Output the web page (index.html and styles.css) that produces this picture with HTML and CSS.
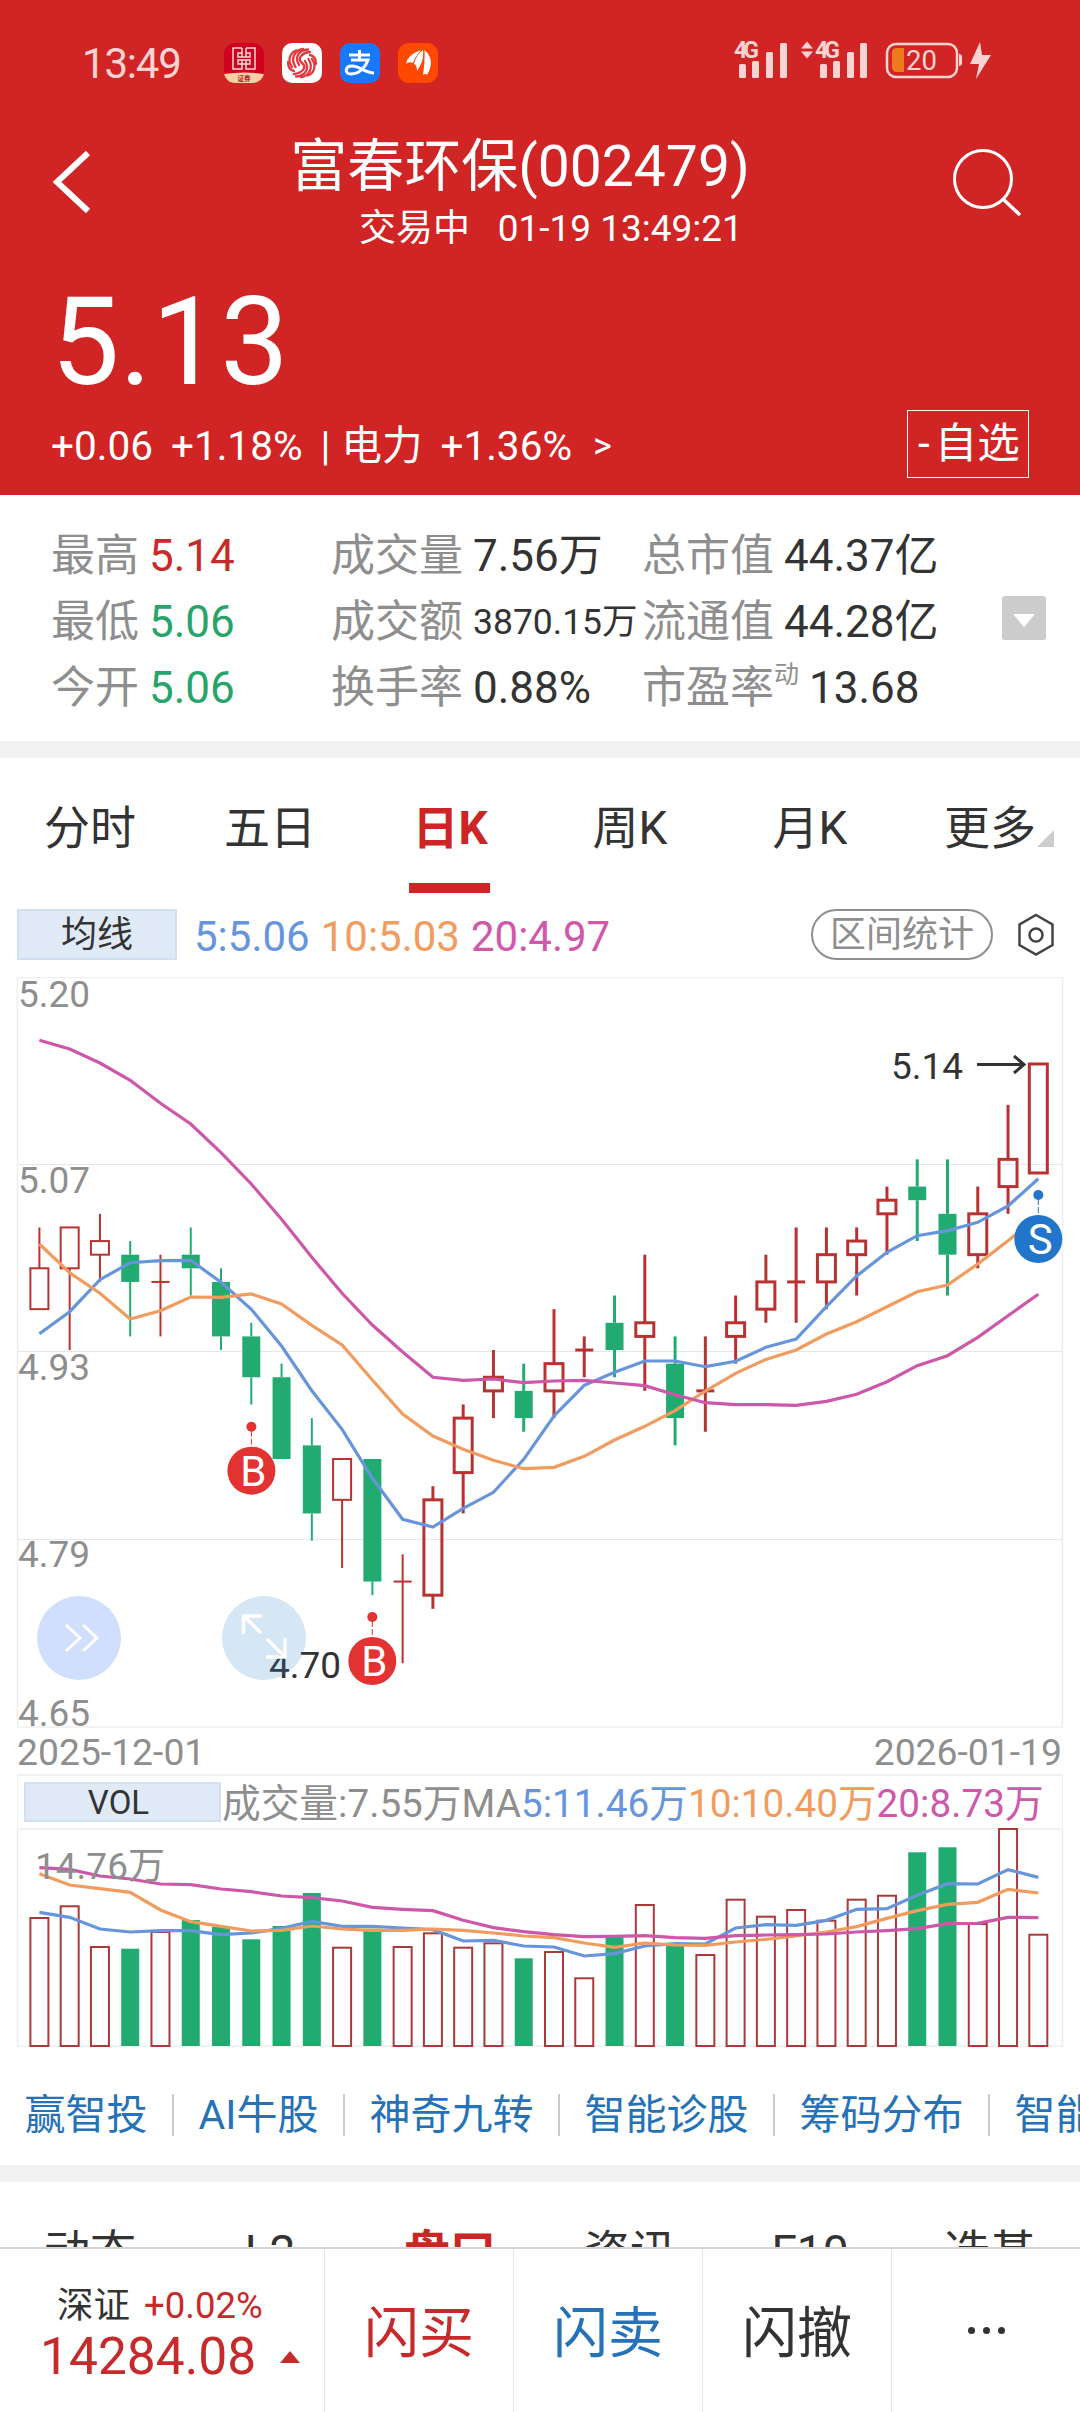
FILE: index.html
```html
<!DOCTYPE html>
<html lang="zh-CN">
<head>
  <meta charset="UTF-8" />
  <meta name="viewport" content="width=device-width, initial-scale=1.0"/>
  <title>富春环保(002479)</title>
  <link rel="stylesheet" href="styles.css">
</head>
<body>
  <header class="header">
    <div class="status-bar">
      <span class="clock">13:49</span>
      <div class="app-icons">
        <svg width="40" height="40" viewBox="0 0 40 40">
          <clipPath id="appClip"><rect width="40" height="40" rx="11"/></clipPath>
          <g clip-path="url(#appClip)">
            <rect width="40" height="40" fill="#d0021f"/>
            <path d="M0 31Q20 28 40 31V40H0Z" fill="#fbd0a4"/>
          </g>
          <path d="M18 5H9V26H18V21H14V17H18M22 5H31V26H22V21H26V17H22M18 5V10H14V14H26V10H22V5M18 10V14M22 10V14M18 17V21H22V17Z" fill="none" stroke="#ffd9d9" stroke-width="1.5"/>
          <text x="20" y="38" text-anchor="middle" font-size="6.5" font-weight="bold" fill="#b3152a">证券</text>
        </svg>
        <svg width="40" height="40" viewBox="0 0 40 40">
          <rect width="40" height="40" rx="10" fill="#fff"/>
          <g fill="none" stroke="#e03a40" stroke-width="2.3" stroke-linecap="round">
            <path d="M20 20C15 16 19 10 28 9"/>
            <path d="M17 22C12 14 17 7 26 6.500"/>
            <path d="M13.500 24C8 15 13 7 21 6"/>
            <path d="M10 24C5 17 8 10 14 7.500"/>
            <path d="M20 20C25 24 21 30 12 31"/>
            <path d="M23 18C28 26 23 33 14 33.500"/>
            <path d="M26.500 16C32 25 27 33 19 34"/>
            <path d="M30 16C35 23 32 30 26 32.500"/>
            <path d="M28 12C33 13 34 17 34 21"/>
            <path d="M12 28C7 27 6 23 6 19"/>
          </g>
        </svg>
        <svg width="40" height="40" viewBox="0 0 40 40">
          <rect width="40" height="40" rx="10" fill="#1878ff"/>
          <path d="M9 12H30M19.500 7V17M11 17H28C26 23 20 31 11 31C4 31 5 23 12 23C20 23 25 30 34 30" fill="none" stroke="#fff" stroke-width="3"/>
        </svg>
        <svg width="40" height="40" viewBox="0 0 40 40">
          <rect width="40" height="40" rx="11" fill="#ff4800"/>
          <path d="M8 21Q9 12 23 7Q17 14 15 20Q11 18 8 21ZM16 21Q18 12 25 7Q26 16 22 23L19 28Q19 22 16 21ZM25 32Q27 18 26.500 7Q38 17 29 32Q27 30 25 32Z" fill="#fff"/>
        </svg>
      </div>
      <svg class="signal" width="280" height="56" viewBox="0 -6 280 56">
        <g fill="#fbd3d3">
          <text x="2" y="17" class="net" textLength="25">4G</text>
          <rect x="7" y="23" width="7" height="14" rx="1.500"/><rect x="20" y="20" width="7" height="17" rx="1.500"/><rect x="34" y="11" width="7" height="26" rx="1.500"/><rect x="48" y="2" width="7" height="35" rx="1.500"/>
          <path d="M69 7.500l6-7 6 7zM69 10.500l6 7 6-7z"/>
          <text x="83" y="17" class="net" textLength="25">4G</text>
          <rect x="88" y="23" width="7" height="14" rx="1.500"/><rect x="101" y="20" width="7" height="17" rx="1.500"/><rect x="115" y="11" width="7" height="26" rx="1.500"/><rect x="128" y="2" width="7" height="35" rx="1.500"/>
          <rect x="155" y="3" width="70" height="33" rx="9" fill="none" stroke="#fbd3d3" stroke-width="2.500"/>
          <path d="M227 13q3 0 3 3v6q0 3-3 3z"/>
          <path d="M172 7h-7q-5 0-5 5v14q0 5 5 5h7z" fill="#ee7b1b"/>
          <text x="174" y="29" font-size="27.500" textLength="31">20</text>
          <path d="M248 1L238 23H247L244 38L259 14H250Z"/>
        </g>
      </svg>
    </div>

    <div class="title-bar">
      <svg class="back" width="50" height="70" viewBox="0 0 50 70"><path d="M40 6L9 35L40 64" fill="none" stroke="#fff" stroke-width="6"/></svg>
      <div class="title">
        <h1>富春环保(002479)</h1>
        <p>交易中&nbsp;&nbsp; 01-19 13:49:21</p>
      </div>
      <svg class="search" width="74" height="74" viewBox="0 0 74 74"><circle cx="33" cy="33" r="28.500" fill="none" stroke="#fff" stroke-width="3"/><path d="M53 53L70 69" stroke="#fff" stroke-width="3.500"/></svg>
    </div>

    <div class="price">5.13</div>
    <div class="change">
      <div class="change-text"><span>+0.06</span><span>+1.18%</span><span class="bar">|</span><span>电力</span><span>+1.36%</span><span class="more">&gt;</span></div>
      <button class="fav">-<span>自选</span></button>
    </div>
  </header>

  <section class="stats">
    <div class="stat"><label>最高</label><b class="up">5.14</b></div>
    <div class="stat"><label>成交量</label><b>7.56万</b></div>
    <div class="stat"><label>总市值</label><b>44.37亿</b></div>
    <div class="stat"><label>最低</label><b class="down">5.06</b></div>
    <div class="stat"><label>成交额</label><b class="small">3870.15万</b></div>
    <div class="stat"><label>流通值</label><b>44.28亿</b></div>
    <div class="stat"><label>今开</label><b class="down">5.06</b></div>
    <div class="stat"><label>换手率</label><b>0.88%</b></div>
    <div class="stat"><label>市盈率<sup>动</sup></label><b>13.68</b></div>
    <button class="expand"></button>
  </section>

  <nav class="tabs">
    <a>分时</a><a>五日</a><a class="active">日K</a><a>周K</a><a>月K</a><a class="has-more">更多</a>
  </nav>

  <div class="ma-row">
    <button class="index-btn">均线</button>
    <span class="c5">5:5.06</span><span class="c10">10:5.03</span><span class="c20">20:4.97</span>
    <button class="range-btn">区间统计</button>
    <svg width="38" height="46" viewBox="0 0 38 46"><path d="M19 3L35.500 12.500V33L19 42.500L2.500 33V12.500Z" fill="none" stroke="#444" stroke-width="2.500"/><circle cx="19" cy="23" r="6.500" fill="none" stroke="#444" stroke-width="2.500"/></svg>
  </div>

  <svg id="kline" width="1080" height="752" viewBox="0 977 1080 752"></svg>
  <div class="dates"><span>2025-12-01</span><span>2026-01-19</span></div>

  <div class="vol-row">
    <button class="index-btn">VOL</button>
    <span>成交量:7.55万MA</span><span class="c5">5:11.46万</span><span class="c10">10:10.40万</span><span class="c20">20:8.73万</span>
  </div>
  <svg id="volume" width="1080" height="220" viewBox="0 1828 1080 220"></svg>

  <div class="links">
    <a>赢智投</a><a>AI牛股</a><a>神奇九转</a><a>智能诊股</a><a>筹码分布</a><a>智能盯盘</a>
  </div>

  <nav class="tabs lower">
    <a>动态</a><a>L2</a><a class="active">盘口</a><a>资讯</a><a>F10</a><a>选基</a>
  </nav>

  <footer class="footer">
    <div class="index">
      <div class="index-name">深证 <span>+0.02%</span></div>
      <div class="index-value">14284.08<i></i></div>
    </div>
    <a class="buy">闪买</a>
    <a class="sell">闪卖</a>
    <a>闪撤</a>
    <a class="dots"><i></i><i></i><i></i></a>
  </footer>

  <script src="chart.js"></script>
</body>
</html>
```
FILE: styles.css
```css
* {
  box-sizing: border-box;
}
body {
  margin: 0;
  width: 1080px;
  height: 2412px;
  overflow: hidden;
  background: #fff;
  color: #333;
  font-family: Roboto, "Noto Sans CJK SC", sans-serif;
}
svg {
  display: block;
  flex-shrink: 0;
}
button {
  font-family: inherit;
  padding: 0;
  color: inherit;
  background: none;
}
.header {
  height: 495px;
  background: #d12525;
  color: #fff;
}

/* status bar */
.status-bar {
  height: 126px;
  display: flex;
  align-items: center;
  padding-left: 82px;
}
.clock {
  width: 142px;
  font-size: 42px;
  letter-spacing: -1.2px;
  color: #fbd3d3;
}
.app-icons {
  display: flex;
  gap: 18px;
}
.signal {
  margin-left: 294px;
}
.net {
  font-size: 23px;
  font-weight: bold;
}

/* title */
.title-bar {
  height: 134px;
  display: flex;
  justify-content: space-between;
  padding: 0 56px 0 48px;
}
.back {
  margin-top: 21px;
}
.search {
  margin-top: 20px;
}
.title {
  text-align: center;
  margin-left: -8px;
}
.title h1 {
  margin: 8px 0 0;
  font-size: 57px;
  line-height: 66px;
  font-weight: normal;
}
.title p {
  margin: 7px 0 0;
  padding-left: 62px;
  font-size: 37px;
  line-height: 44px;
  white-space: nowrap;
}
.price {
  height: 148px;
  padding-left: 51px;
  font-size: 122px;
  line-height: 166px;
}
.change {
  display: flex;
  justify-content: space-between;
  align-items: center;
  padding: 2px 51px 0 51px;
}
.change-text {
  display: flex;
  align-items: center;
  padding-top: 3px;
  font-size: 40.500px;
  line-height: 50px;
}
.change-text span {
  margin-right: 18px;
}
.change-text .bar {
  margin-right: 11px;
}
.change-text .more {
  margin-left: 3px;
  font-size: 36px;
}
.fav {
  width: 122px;
  height: 68px;
  border: 1px solid #fff;
  color: #fff;
  font-size: 42.500px;
  line-height: 66px;
  padding-left: 2px;
  white-space: nowrap;
}
.fav span {
  margin-left: 5px;
}

/* stats */
.stats {
  position: relative;
  height: 263px;
  padding: 28px 0 0 51px;
  border-bottom: 17px solid #f1f1f1;
  display: grid;
  grid-template-columns: 280px 311px 1fr;
  grid-auto-rows: 66px;
}
.stat {
  display: flex;
  align-items: center;
  gap: 10px;
  font-size: 44px;
  line-height: 66px;
  white-space: nowrap;
}
.stat label {
  color: #8e8e8e;
}
.stat b {
  font-weight: normal;
}
.stat .small {
  font-size: 35.500px;
}
.stat sup {
  font-size: 25px;
  line-height: 0;
  vertical-align: 20px;
}
.stat .up {
  color: #c62a2a;
}
.stat .down {
  color: #27a468;
}
.expand {
  position: absolute;
  right: 34px;
  top: 101px;
  width: 44px;
  height: 44px;
  border: none;
  border-radius: 3px;
  background: #ccc;
}
.expand::after {
  content: "";
  display: block;
  margin: 4px auto 0;
  width: 0;
  border: 11.500px solid transparent;
  border-top: 13px solid #fff;
  border-bottom: none;
}

/* tabs */
.tabs {
  height: 135px;
  display: grid;
  grid-template-columns: repeat(6, 1fr);
}
.tabs a {
  position: relative;
  height: 135px;
  font-size: 46px;
  line-height: 140px;
  text-align: center;
}
.tabs .active {
  color: #cb2525;
  font-weight: bold;
}
.tabs .active::after {
  content: "";
  position: absolute;
  left: 49px;
  bottom: 0;
  width: 81px;
  height: 10px;
  background: #d12525;
}
.tabs .has-more::after {
  content: "";
  position: absolute;
  right: 26px;
  top: 72px;
  border-left: 17px solid transparent;
  border-bottom: 17px solid #ccc;
}

/* indicator rows */
.ma-row {
  height: 84px;
  padding: 16px 25px 17px 17px;
  display: flex;
  align-items: center;
  font-size: 42px;
}
.ma-row span {
  margin-right: 11px;
  padding-top: 3px;
}
.index-btn {
  width: 160px;
  height: 51px;
  margin-right: 17px;
  border: 2px solid #d3e0f3;
  background: #e0eaf7;
  font-size: 36px;
  line-height: 48px;
}
.range-btn {
  width: 182px;
  height: 51px;
  margin: 0 24px 0 auto;
  border: 2px solid #8e8e8e;
  border-radius: 26px;
  color: #8e8e8e;
  font-size: 36px;
  line-height: 48px;
}
.c5 {
  color: #6795dc;
}
.c10 {
  color: #f19c5e;
}
.c20 {
  color: #d057a9;
}
.axis {
  font-size: 37px;
  fill: #8e8e8e;
}
.mark {
  font-size: 37px;
  fill: #333;
}
.badge {
  font-size: 42px;
  fill: #fff;
  text-anchor: middle;
}
.dates {
  height: 45px;
  padding: 0 18px 0 17px;
  display: flex;
  justify-content: space-between;
  font-size: 37.300px;
  line-height: 47px;
  color: #8e8e8e;
}
.vol-row {
  height: 54px;
  margin: 0 17px;
  padding-left: 6px;
  border: 2px solid #f1f1f1;
  border-width: 2px 1px 0;
  display: flex;
  align-items: center;
  font-size: 38.700px;
  line-height: 50px;
  color: #8e8e8e;
  white-space: nowrap;
}
.vol-row span {
  padding-top: 4px;
}
.vol-row .index-btn {
  width: 197px;
  height: 40px;
  margin: 0 1px 0 0;
  padding-right: 8px;
  color: #333;
  font-size: 33px;
  line-height: 38px;
}

/* links */
.links {
  height: 134px;
  border-bottom: 17px solid #f1f1f1;
  padding: 17px 0 0;
  display: flex;
  align-items: center;
  overflow: hidden;
}
.links a {
  flex-shrink: 0;
  padding: 0 24.500px;
  border-left: 2px solid #ccc;
  font-size: 41px;
  line-height: 42px;
  color: #2672b9;
}
.links a:first-child {
  border-left: none;
}

/* bottom bar */
.footer {
  position: fixed;
  left: 0;
  bottom: 0;
  width: 1080px;
  height: 165px;
  border-top: 2px solid #d5d5d5;
  background: #fff;
  display: grid;
  grid-template-columns: 324px repeat(4, 1fr);
}
.footer a {
  height: 163px;
  border-left: 1px solid #e3e3e3;
  font-size: 55px;
  line-height: 169px;
  text-align: center;
}
.footer .buy,
.index-name span,
.index-value {
  color: #c62a2a;
}
.footer .sell {
  color: #2672b9;
}
.index-name {
  margin-top: 32px;
  padding-left: 57px;
  font-size: 36.500px;
  line-height: 50px;
}
.index-name span {
  margin-left: 5px;
}
.index-value {
  display: flex;
  align-items: center;
  padding-left: 40px;
  font-size: 51.500px;
  line-height: 52px;
}
.index-value i {
  margin-left: 24px;
  border: 10px solid transparent;
  border-top: none;
  border-bottom: 12px solid #c62a2a;
}
.footer .dots {
  display: flex;
  justify-content: center;
  align-items: center;
  gap: 8px;
}
.dots i {
  width: 7px;
  height: 7px;
  border-radius: 50%;
  background: #333;
}
```
FILE: chart.js
```javascript
const RED = "#b83232";
const GREEN = "#22ab70";
const COLORS = ["#6795dc", "#f19c5e", "#cd57a9"];
const xAt = i => 39.4 + i * 30.27;
const priceY = p => 1064 + (514 - p) * 13.62;

// type, body top, body bottom, high, low (price x 100)
const candles = [
  ["r", 499, 496, 502, 496], ["r", 502, 499, 502, 493], ["r", 501, 500, 503, 498],
  ["g", 500, 498, 501, 494], ["r", 498, 498, 500, 494], ["g", 500, 499, 502, 497],
  ["g", 498, 494, 499, 493], ["g", 494, 491, 495, 489], ["g", 491, 485, 492, 485],
  ["g", 486, 481, 488, 479], ["r", 485, 482, 485, 477], ["g", 485, 476, 485, 475],
  ["r", 476, 476, 478, 470], ["r", 482, 475, 483, 474], ["r", 488, 484, 489, 481],
  ["r", 491, 490, 493, 488], ["g", 490, 488, 492, 487], ["r", 492, 490, 496, 488],
  ["r", 493, 493, 494, 491], ["g", 495, 493, 497, 491], ["r", 495, 494, 500, 490],
  ["g", 492, 488, 494, 486], ["r", 490, 490, 494, 487], ["r", 495, 494, 497, 492],
  ["r", 498, 496, 500, 495], ["r", 498, 498, 502, 495], ["r", 500, 498, 502, 496],
  ["r", 501, 500, 502, 497], ["r", 504, 503, 505, 500], ["g", 505, 504, 507, 501],
  ["g", 503, 500, 507, 497], ["r", 503, 500, 505, 499], ["r", 507, 505, 511, 503],
  ["r", 514, 506, 514, 506]
];

const priceMa = [
  [1333.7, 1311.7, 1279.7, 1262.7, 1260.7, 1260.3, 1282.3, 1309.3, 1346, 1390.7, 1429.3, 1478.3, 1519.3, 1527, 1508.3, 1492.3, 1459.3, 1416, 1385.3, 1372.3, 1361, 1361, 1366.7, 1361.3, 1347.3, 1339, 1306.7, 1276, 1252.3, 1235.7, 1230.7, 1222.3, 1206, 1178.7],
  [1244, 1272.7, 1293.3, 1319, 1310.7, 1297, 1297.3, 1294, 1304, 1325.3, 1345, 1380, 1414, 1436, 1449.3, 1460.3, 1468.7, 1467.3, 1456.3, 1440, 1426.3, 1410.7, 1391, 1373.3, 1359.5, 1350, 1334, 1321.7, 1306.7, 1291.7, 1285, 1264, 1240.7, 1216],
  [1040.3, 1049, 1063, 1080.3, 1103.3, 1124, 1152.7, 1184, 1219.3, 1257.3, 1293.3, 1325, 1352, 1377.3, 1380.3, 1379, 1382.7, 1381, 1380.3, 1383, 1385.7, 1394.7, 1402.7, 1404.7, 1404.7, 1405.3, 1401.3, 1394.3, 1381.7, 1365.7, 1355.7, 1337.3, 1315.7, 1294.3]
];

const volTop = [1918, 1906.3, 1947, 1948.7, 1932, 1920, 1926.7, 1939.3, 1926, 1893, 1947.7, 1928.7, 1947, 1933.3, 1947.7, 1943.3, 1958.3, 1952, 1978.3, 1937.3, 1905, 1945.3, 1955, 1899.7, 1916.7, 1910, 1920.7, 1899.7, 1895.7, 1852.3, 1847.3, 1924, 1829, 1934.7];
// volume averages, in thirds of a pixel below 1760
const volMa = [
  [457, 472, 507, 516, 512, 512, 524, 519, 505, 484, 499, 499, 504, 509, 543, 541, 558, 561, 588, 581, 558, 551, 552, 504, 494, 496, 481, 448, 446, 406, 371, 372, 329, 352],
  [341, 375, 386, 397, 450, 485, 499, 513, 511, 498, 507, 511, 511, 507, 511, 519, 528, 533, 549, 562, 549, 555, 556, 546, 538, 528, 516, 500, 475, 452, 433, 427, 388, 399],
  [323, 328, 348, 357, 372, 374, 387, 395, 408, 413, 423, 442, 448, 452, 481, 503, 515, 524, 530, 529, 527, 533, 535, 527, 525, 524, 522, 516, 512, 506, 491, 490, 472, 473]
].map(line => line.map(v => 1760 + v / 3));

function line(x1, y1, x2, y2, color, width) {
  return `<path d="M${x1} ${y1}L${x2} ${y2}" stroke="${color}" stroke-width="${width}"/>`;
}

function polylines(series) {
  return series.map((ys, n) => {
    const pts = ys.map((y, i) => `${xAt(i)},${y}`).join(" ");
    return `<polyline points="${pts}" fill="none" stroke="${COLORS[n]}" stroke-width="3.2"/>`;
  }).join("");
}

function badge(x, y, letter, color) {
  return `<circle cx="${x}" cy="${y - 44}" r="5" fill="${color}"/>
    <path d="M${x} ${y - 40}V${y - 24}" stroke="${color}" stroke-dasharray="6 2"/>
    <circle cx="${x}" cy="${y}" r="24" fill="${color}"/>
    <text x="${x + 2}" y="${y + 15}" class="badge">${letter}</text>`;
}

function drawKline() {
  let s = `<rect x="17.5" y="977.5" width="1045" height="749.5" fill="none" stroke="#eee" stroke-width="1.5"/>`;
  [1164.5, 1351.5, 1539.5].forEach(y => s += line(17, y, 1062, y, "#e6e6e6", 1.2));
  candles.forEach(([type, top, bottom, high, low], i) => {
    const x = xAt(i), t = priceY(top), b = priceY(bottom);
    const color = type === "r" ? RED : GREEN;
    const w = i < 13 ? 2 : 3;
    if (high > top) s += line(x, priceY(high), x, t, color, w);
    if (low < bottom) s += line(x, b, x, priceY(low), color, w);
    if (top === bottom) s += line(x - 9, t, x + 9, t, color, w);
    else if (type === "g") s += `<rect x="${x - 9}" y="${t}" width="18" height="${b - t}" fill="${GREEN}"/>`;
    else s += `<rect x="${x - 9}" y="${t}" width="18" height="${b - t}" fill="none" stroke="${RED}" stroke-width="${w}"/>`;
  });
  s += polylines(priceMa);
  [["5.20", 1006.5], ["5.07", 1193], ["4.93", 1380], ["4.79", 1567], ["4.65", 1726]].forEach(([t, y]) => {
    s += `<text x="18" y="${y}" class="axis">${t}</text>`;
  });
  s += `<text x="891" y="1079" class="mark">5.14</text>
    <path d="M977 1064.5H1024M1014 1056L1024 1064.5L1014 1073" fill="none" stroke="#333" stroke-width="3"/>
    <text x="269" y="1678" class="mark">4.70</text>`;
  // floating buttons
  s += `<circle cx="79" cy="1638" r="42" fill="#d1dfff"/>
    <path d="M66 1625L80 1638L66 1651M83 1625L97 1638L83 1651" fill="none" stroke="#fff" stroke-width="3"/>
    <circle cx="264" cy="1638" r="42" fill="#2b84c9" fill-opacity=".2"/>
    <path d="M261 1633L244 1616M243.500 1634V1616H262M267 1639L284 1656M285 1638V1657H266" fill="none" stroke="#fff" stroke-width="3.5"/>`;
  s += badge(251.4, 1470.7, "B", "#e33232") + badge(372.3, 1661, "B", "#e33232") + badge(1038.3, 1239, "S", "#2175cb");
  document.getElementById("kline").innerHTML = s;
}

function drawVolume() {
  let s = `<rect x="17.5" y="1829" width="1045" height="217" fill="none" stroke="#eee" stroke-width="1.5"/>`;
  volTop.forEach((y, i) => {
    const x = xAt(i);
    if (candles[i][0] === "g") s += `<rect x="${x - 9}" y="${y}" width="18" height="${2046 - y}" fill="${GREEN}"/>`;
    else s += `<rect x="${x - 9}" y="${y}" width="18" height="${2046 - y}" fill="none" stroke="#a83a3a" stroke-width="2"/>`;
  });
  s += polylines(volMa) + `<text x="35" y="1879" class="axis">14.76万</text>`;
  document.getElementById("volume").innerHTML = s;
}

drawKline();
drawVolume();
```
